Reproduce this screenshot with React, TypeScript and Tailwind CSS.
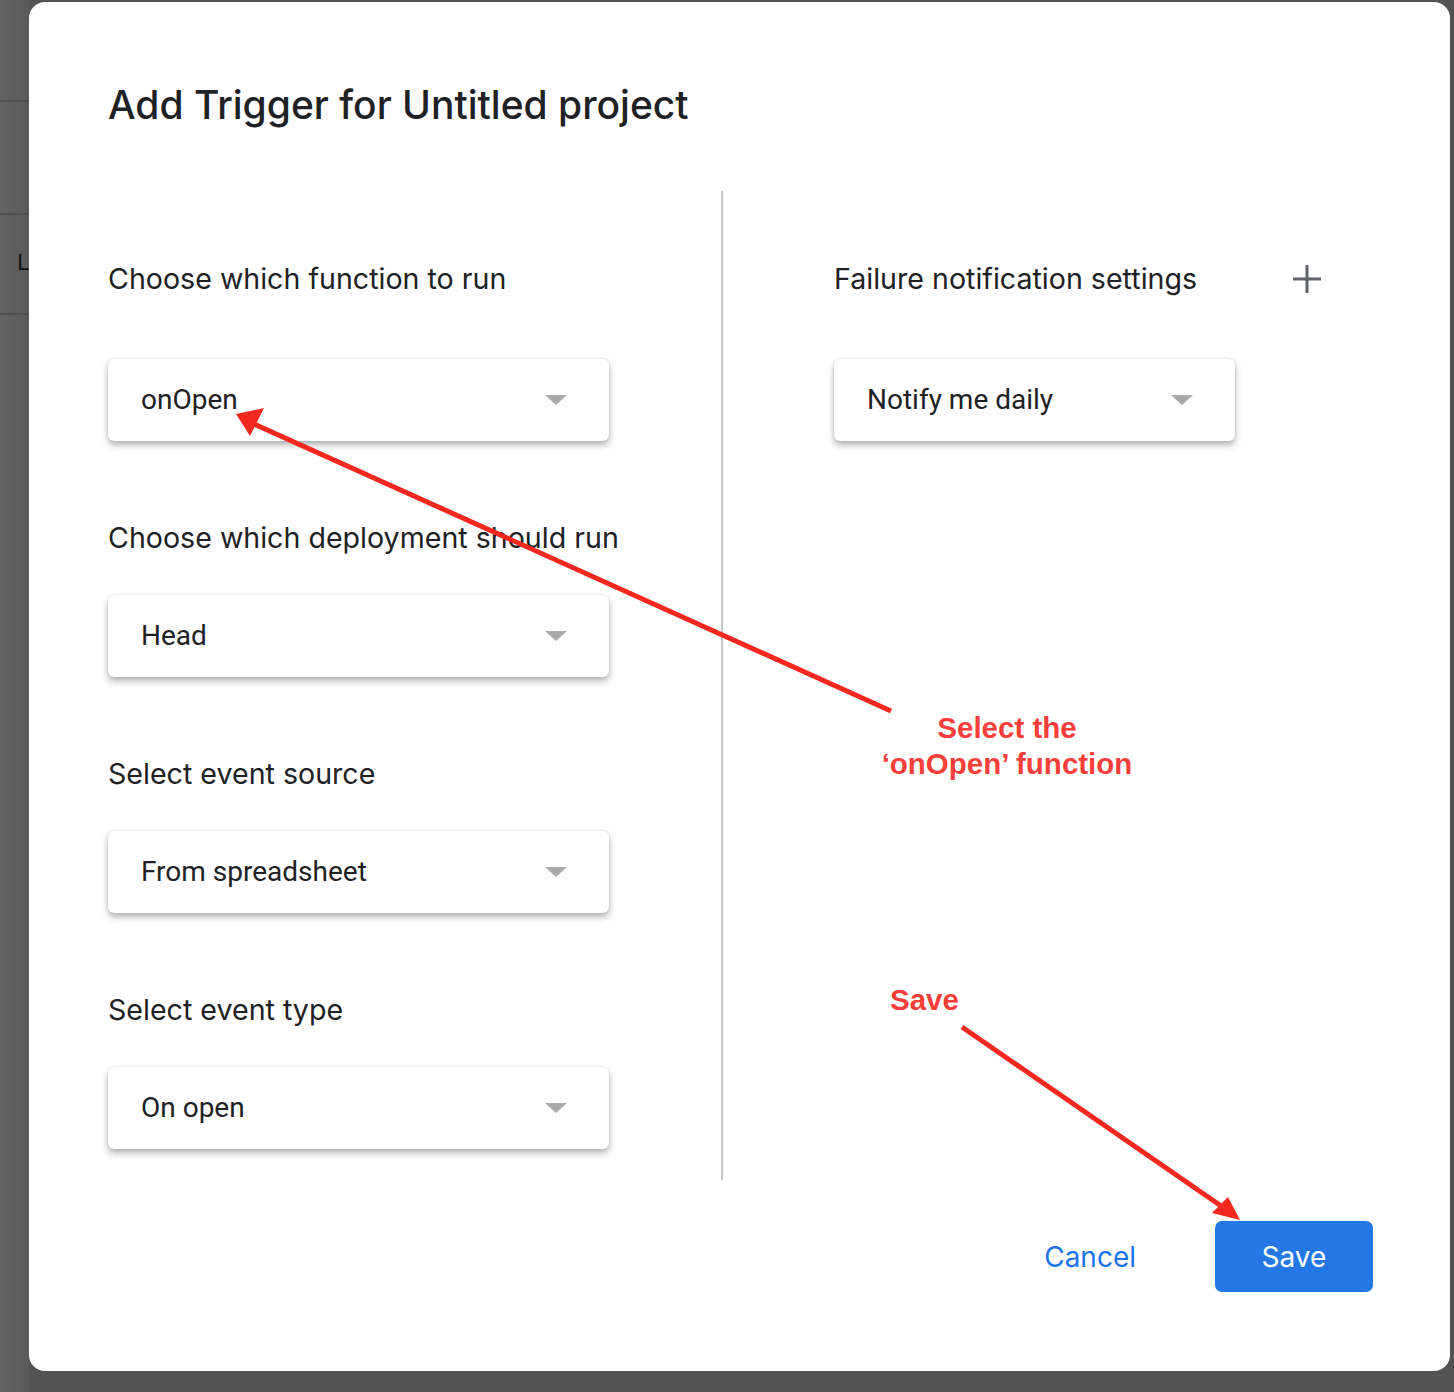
import React from "react";

const heading = { fontFamily: "Inter, 'Noto Sans', sans-serif" };
const body = { fontFamily: "Roboto, 'Liberation Sans', sans-serif" };

function Caret() {
  return (
    <svg width="24" height="12" viewBox="0 0 24 12" className="shrink-0">
      <path d="M1 1 L23 1 L12 11 Z" fill="#a9a9a9" />
    </svg>
  );
}

function Select({ value, className = "" }: { value: string; className?: string }) {
  return (
    <div
      className={`flex h-[82px] items-center justify-between rounded-[6px] bg-white pl-[33px] pr-[41px] shadow-[0_4px_7px_rgba(0,0,0,0.3),0_0_2px_rgba(0,0,0,0.16)] ${className}`}
    >
      <span className="text-[28px] text-[#202124]" style={body}>
        {value}
      </span>
      <Caret />
    </div>
  );
}

function Label({ children }: { children: React.ReactNode }) {
  return (
    <div className="text-[28.6px] leading-[36px] text-[#202124]" style={heading}>
      {children}
    </div>
  );
}

export default function App() {
  return (
    <div className="relative flex h-[1392px] w-[1454px] overflow-hidden bg-[#535353]">
      {/* page behind the modal */}
      <div className="flex w-[29px] shrink-0 flex-col bg-gradient-to-r from-[#636363] to-[#5a5a5a]">
        <div className="h-[102px] border-b-2 border-[#4e4e4e]" />
        <div className="h-[113px] border-b-2 border-[#4e4e4e]" />
        <div className="flex h-[100px] items-center justify-end border-b-2 border-[#4e4e4e] pb-[2px]">
          <span className="text-[22px] leading-none text-[#111]" style={body}>
            L
          </span>
        </div>
      </div>

      <div className="mt-[2px] flex h-[1369px] w-[1421px] flex-col rounded-[16px] bg-white pl-[79px]">
        <h1 className="mt-[78px] text-[39px] font-medium leading-[50px] text-[#202124]" style={heading}>
          Add Trigger for Untitled project
        </h1>

        <div className="mt-[61px] flex">
          <div className="flex w-[613px] flex-col pt-[70px]">
            <Label>Choose which function to run</Label>
            <Select value="onOpen" className="mt-[62px] w-[501px]" />
            <div className="mt-[79px]">
              <Label>Choose which deployment should run</Label>
            </div>
            <Select value="Head" className="mt-[39px] w-[501px]" />
            <div className="mt-[79px]">
              <Label>Select event source</Label>
            </div>
            <Select value="From spreadsheet" className="mt-[39px] w-[501px]" />
            <div className="mt-[79px]">
              <Label>Select event type</Label>
            </div>
            <Select value="On open" className="mt-[39px] w-[501px]" />
          </div>

          <div className="h-[989px] w-[2px] bg-[#c4c7cb]" />

          <div className="flex flex-col pl-[111px] pt-[70px]">
            <div className="flex w-[489px] items-center justify-between">
              <Label>Failure notification settings</Label>
              <svg width="30" height="30" viewBox="0 0 30 30" className="mr-[1px]">
                <path d="M15 1 V29 M1 15 H29" stroke="#5f6368" strokeWidth="3" />
              </svg>
            </div>
            <Select value="Notify me daily" className="mt-[62px] w-[401px]" />
          </div>
        </div>

        <div className="mt-[41px] flex items-center justify-end pr-[77px]">
          <button className="mr-[79px] text-[28px] text-[#1a73e8]" style={heading}>
            Cancel
          </button>
          <button
            className="flex h-[71px] w-[158px] items-center justify-center rounded-[7px] bg-[#2378e6] text-[28px] text-white"
            style={heading}
          >
            Save
          </button>
        </div>
      </div>

      {/* annotations */}
      <svg className="pointer-events-none absolute left-0 top-0" width="1454" height="1392">
        <line x1="891" y1="711" x2="252" y2="423" stroke="#f4281e" strokeWidth="5" />
        <path d="M236 414 L264 408 L250 436 Z" fill="#f4281e" />
        <line x1="962" y1="1027" x2="1224" y2="1208" stroke="#f4281e" strokeWidth="5" />
        <path d="M1240 1220 L1212 1213 L1228 1197 Z" fill="#f4281e" />
      </svg>
      <div
        className="absolute left-[857px] top-[710px] w-[300px] text-center text-[29.5px] font-bold leading-[36px] text-[#fa3f3a]"
        style={{ fontFamily: "'Liberation Sans', Arial, sans-serif" }}
      >
        Select the
        <br />‘onOpen’ function
      </div>
      <div
        className="absolute left-[890px] top-[982px] text-[29.5px] font-bold leading-[36px] text-[#fa3f3a]"
        style={{ fontFamily: "'Liberation Sans', Arial, sans-serif" }}
      >
        Save
      </div>
    </div>
  );
}
